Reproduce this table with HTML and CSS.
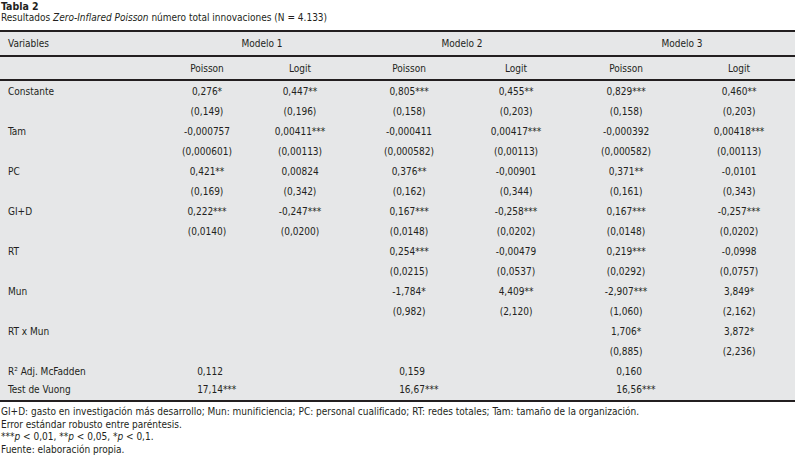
FILE: index.html
```html
<!DOCTYPE html>
<html lang="es">
<head>
<meta charset="utf-8">
<title>Tabla 2</title>
<link rel="stylesheet" href="styles.css">
</head>
<body>
<div class="caption">
  <div class="cap-title">Tabla 2</div>
  <div class="cap-sub">Resultados <em>Zero-Inflared Poisson</em> número total innovaciones (N = 4.133)</div>
</div>
<table class="results">
  <colgroup>
    <col class="c-var"><col class="c1"><col class="c2"><col class="c3"><col class="c4"><col class="c5"><col class="c6">
  </colgroup>
  <thead>
    <tr class="hrow">
      <th class="var">Variables</th>
      <th colspan="2">Modelo 1</th>
      <th colspan="2">Modelo 2</th>
      <th colspan="2">Modelo 3</th>
    </tr>
    <tr class="hrow sub">
      <th></th>
      <th>Poisson</th><th>Logit</th>
      <th>Poisson</th><th>Logit</th>
      <th>Poisson</th><th>Logit</th>
    </tr>
  </thead>
  <tbody>
    <tr><td class="var">Constante</td><td>0,276*</td><td>0,447**</td><td>0,805***</td><td>0,455**</td><td>0,829***</td><td>0,460**</td></tr>
    <tr><td class="var"></td><td>(0,149)</td><td>(0,196)</td><td>(0,158)</td><td>(0,203)</td><td>(0,158)</td><td>(0,203)</td></tr>
    <tr><td class="var">Tam</td><td>-0,000757</td><td>0,00411***</td><td>-0,000411</td><td>0,00417***</td><td>-0,000392</td><td>0,00418***</td></tr>
    <tr><td class="var"></td><td>(0,000601)</td><td>(0,00113)</td><td>(0,000582)</td><td>(0,00113)</td><td>(0,000582)</td><td>(0,00113)</td></tr>
    <tr><td class="var">PC</td><td>0,421**</td><td>0,00824</td><td>0,376**</td><td>-0,00901</td><td>0,371**</td><td>-0,0101</td></tr>
    <tr><td class="var"></td><td>(0,169)</td><td>(0,342)</td><td>(0,162)</td><td>(0,344)</td><td>(0,161)</td><td>(0,343)</td></tr>
    <tr><td class="var">GI+D</td><td>0,222***</td><td>-0,247***</td><td>0,167***</td><td>-0,258***</td><td>0,167***</td><td>-0,257***</td></tr>
    <tr><td class="var"></td><td>(0,0140)</td><td>(0,0200)</td><td>(0,0148)</td><td>(0,0202)</td><td>(0,0148)</td><td>(0,0202)</td></tr>
    <tr><td class="var">RT</td><td></td><td></td><td>0,254***</td><td>-0,00479</td><td>0,219***</td><td>-0,0998</td></tr>
    <tr><td class="var"></td><td></td><td></td><td>(0,0215)</td><td>(0,0537)</td><td>(0,0292)</td><td>(0,0757)</td></tr>
    <tr><td class="var">Mun</td><td></td><td></td><td>-1,784*</td><td>4,409**</td><td>-2,907***</td><td>3,849*</td></tr>
    <tr><td class="var"></td><td></td><td></td><td>(0,982)</td><td>(2,120)</td><td>(1,060)</td><td>(2,162)</td></tr>
    <tr><td class="var">RT x Mun</td><td></td><td></td><td></td><td></td><td>1,706*</td><td>3,872*</td></tr>
    <tr><td class="var"></td><td></td><td></td><td></td><td></td><td>(0,885)</td><td>(2,236)</td></tr>
    <tr class="fit"><td class="var">R² Adj. McFadden</td><td>0,112</td><td></td><td>0,159</td><td></td><td>0,160</td><td></td></tr>
    <tr class="fit last"><td class="var">Test de Vuong</td><td>17,14<span class="hang">***</span></td><td></td><td>16,67<span class="hang">***</span></td><td></td><td>16,56<span class="hang">***</span></td><td></td></tr>
  </tbody>
</table>
<div class="notes">
  <p>GI+D: gasto en investigación más desarrollo; Mun: munificiencia; PC: personal cualificado; RT: redes totales; Tam: tamaño de la organización.</p>
  <p>Error estándar robusto entre paréntesis.</p>
  <p>***<i>p</i> &lt; 0,01, **<i>p</i> &lt; 0,05, *<i>p</i> &lt; 0,1.</p>
  <p>Fuente: elaboración propia.</p>
</div>
</body>
</html>
```
FILE: styles.css
```css
html, body {
  margin: 0;
  padding: 0;
  background: #ffffff;
}
body {
  font-family: "DejaVu Sans Condensed", "Liberation Sans Narrow", "Liberation Sans", sans-serif;
  font-size: 10px;
  color: #231f20;
  width: 795px;
}
.caption {
  padding: 0 1px;
  line-height: 12px;
  margin-bottom: 6px;
}
.cap-title {
  font-weight: bold;
  font-size: 10.5px;
}
.cap-sub em {
  font-style: italic;
}
.results {
  width: 795px;
  border-collapse: collapse;
  table-layout: fixed;
  background: #e6e7e8;
  border-top: 2px solid #231f20;
  border-bottom: 2px solid #231f20;
}
.c-var { width: 169px; }
.c1 { width: 76px; }
.c2 { width: 110px; }
.c3 { width: 108px; }
.c4 { width: 106px; }
.c5 { width: 114px; }
.c6 { width: 112px; }
.results th {
  font-weight: normal;
  text-align: center;
  padding: 0;
  height: 23px;
  border-bottom: 2px solid #231f20;
}
.results .sub th {
  height: 22px;
}
.results td {
  text-align: center;
  padding: 0;
  height: 20px;
  white-space: nowrap;
}
.results .var {
  text-align: left;
  padding-left: 8px;
}
.results .last td {
  height: 16px;
  vertical-align: top;
  padding-top: 3px;
}
.fit td:not(.var) {
  padding-left: 6px;
}
.hang {
  display: inline-block;
  width: 0;
  white-space: nowrap;
}
.notes {
  padding: 4px 1px 0;
}
.notes p {
  margin: 0;
  line-height: 12.5px;
}
```
